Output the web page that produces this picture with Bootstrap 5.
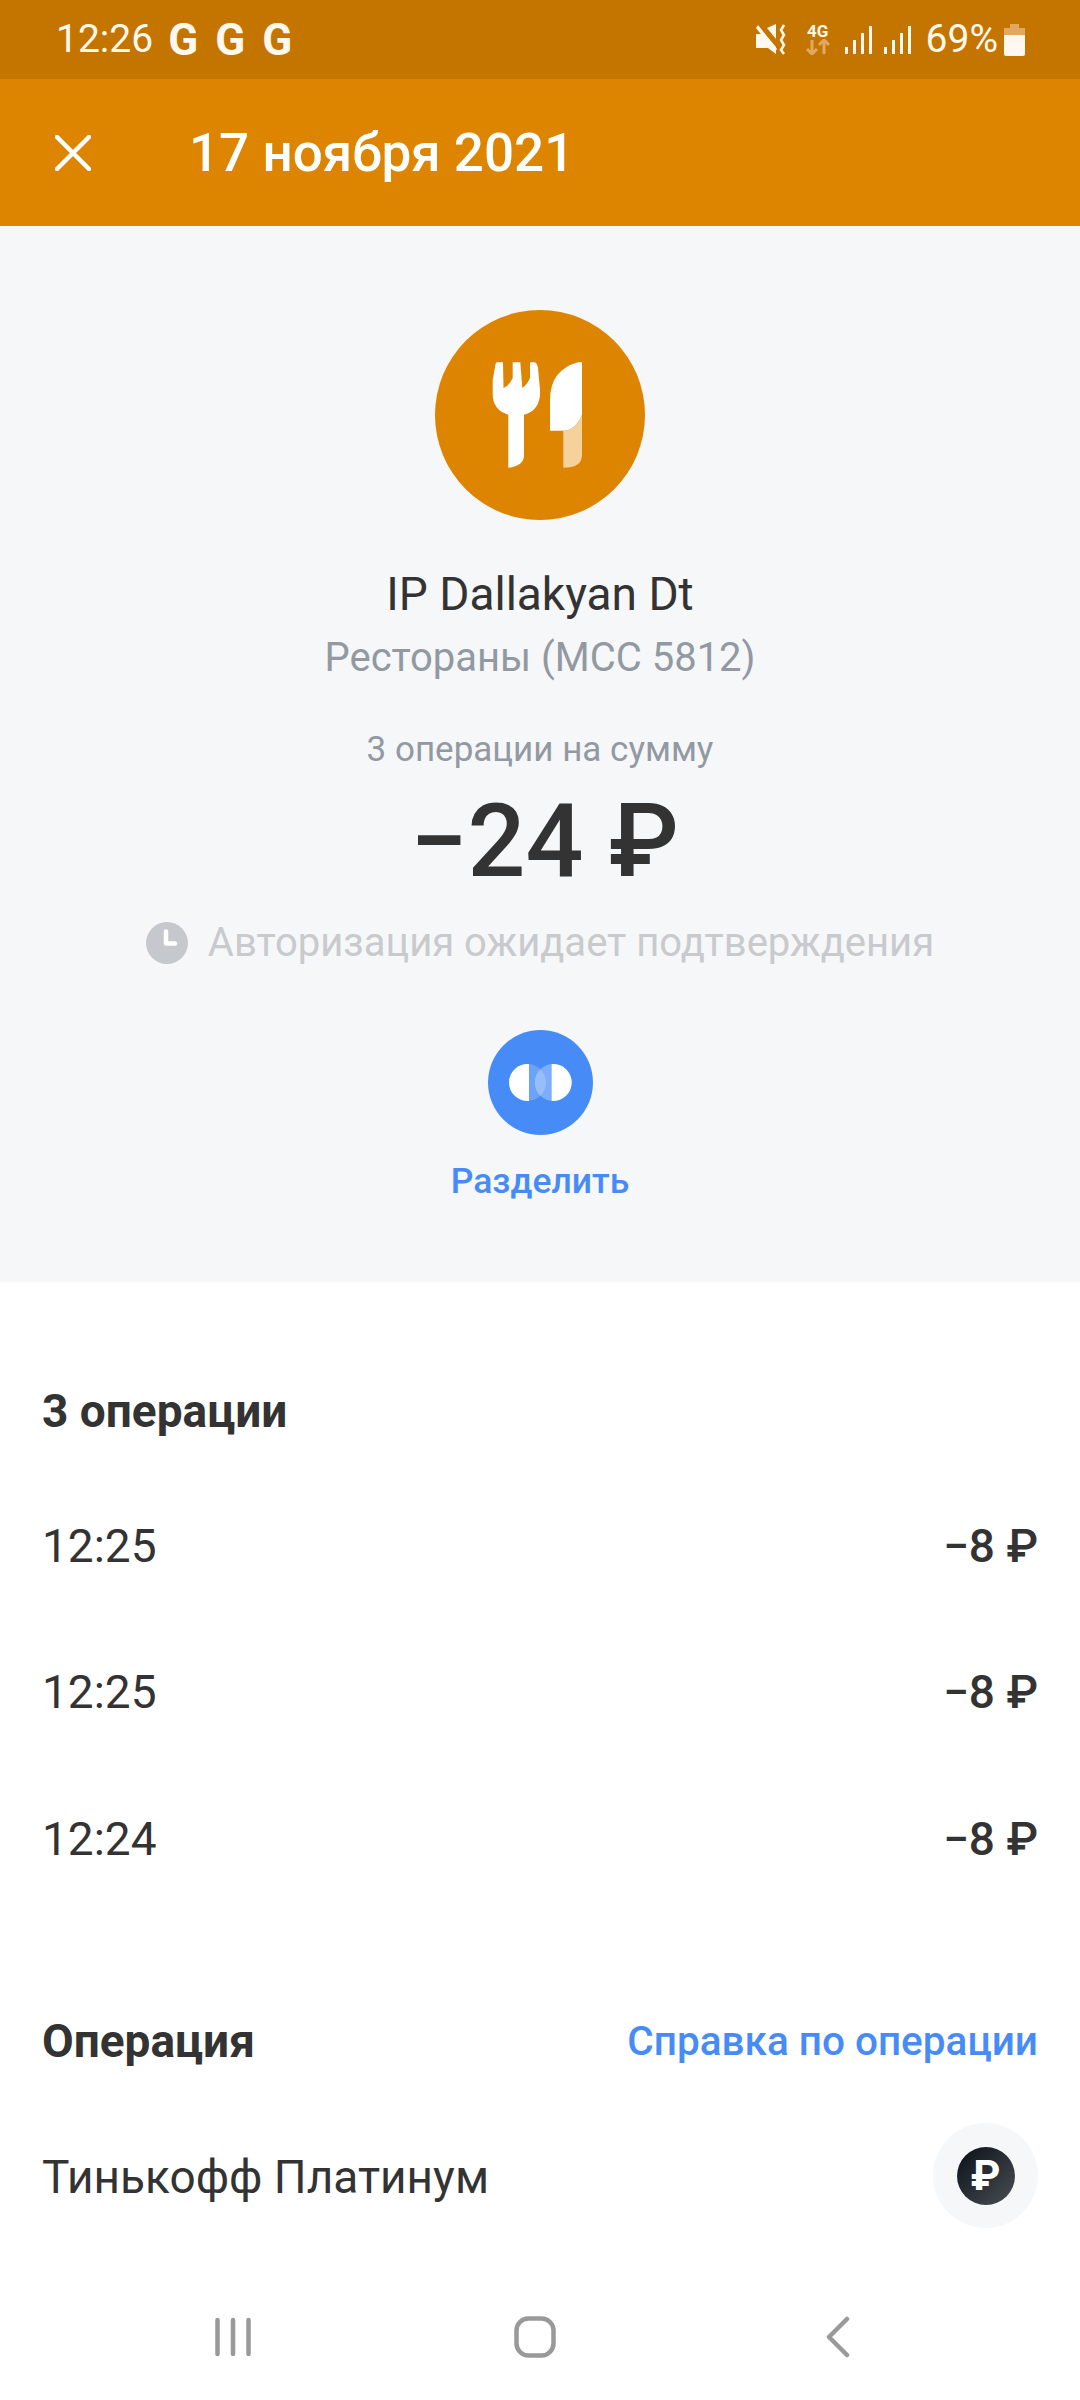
<!DOCTYPE html>
<html lang="ru">
<head>
    <meta charset="UTF-8">
    <meta name="viewport" content="width=device-width, initial-scale=1.0">
    <title>17 ноября 2021</title>
    <link href="https://cdn.jsdelivr.net/npm/bootstrap@5.3.0/dist/css/bootstrap.min.css" rel="stylesheet">
    <style>
        body { font-family: Roboto, "Liberation Sans", sans-serif; color: #333; background: #fff; }
        .screen { width: 1080px; height: 2400px; overflow: hidden; }

        .status-bar { height: 79px; background: #c47500; color: #fff8ee; padding: 0 55px 0 56px; font-size: 39px; }
        .status-left { gap: 17px; }
        .status-time { margin-right: -2px; }
        .status-g { font-weight: 700; font-size: 44px; line-height: 1; width: 30px; text-align: center; }
        .status-icons svg { display: block; }
        .ic-mute { margin-right: 18px; }
        .ic-net { margin-right: 15px; width: 24px; }
        .ic-net-label { font-size: 17px; line-height: 15px; font-weight: 700; text-align: center; white-space: nowrap; }
        .ic-sig { margin-right: 12px; }
        .ic-sig-last { margin-right: 15px; }
        .ic-batt { margin-left: 6px; }
        .top-bar { height: 147px; background: #dd8500; color: #fff; padding-left: 55px; }
        .top-title { font-size: 53px; font-weight: 500; margin-left: 98px; padding-top: 3px; }

        .summary { height: 1056px; background: #f6f7f8; padding-top: 84px; }
        .cat-circle { width: 210px; height: 210px; background: #dd8500; }
        .merchant { font-size: 46px; line-height: 50px; margin-top: 49px; }
        .category { font-size: 40px; line-height: 46px; margin-top: 16px; color: #9299a2; }
        .count-line { font-size: 35px; line-height: 40px; margin-top: 49px; color: #9299a2; }
        .total { font-size: 102px; line-height: 110px; margin-top: 16px; padding-left: 9px; font-weight: 500; }
        .auth-line { font-size: 40px; line-height: 44px; margin-top: 25px; color: #c8cacd; gap: 20px; }
        .split-circle { width: 105px; height: 105px; background: #478cf6; margin-top: 65px; }
        .split-label { font-size: 35.5px; line-height: 40px; margin-top: 26px; font-weight: 500; color: #478cf6; }

        .details { padding: 0 42px; }
        .section-title { font-size: 46px; line-height: 48px; font-weight: 700; }
        .ops-title { margin-top: 105px; }
        .ops-list { margin-top: 38px; }
        .op-row { height: 146.5px; font-size: 46px; }
        .op-sum { font-weight: 500; font-size: 46px; }
        .info-head { margin-top: 98px; }
        .help-link { font-size: 40.5px; font-weight: 500; color: #478cf6; text-decoration: none; }
        .card-line { margin-top: 52px; }
        .card-name { font-size: 46px; padding-top: 4px; }
        .card-chip { width: 105px; height: 105px; background: #f6f7f8; }
        .card-dot { width: 58px; height: 58px; background: linear-gradient(135deg, #0a1017, #4a4f55); color: #fff; font-size: 42px; font-weight: 700; line-height: 1; }

        .nav-bottom { height: 120px; background: #fff; padding-bottom: 6px; }
        .nav-menu { margin-left: 215px; }
        .nav-home { margin-left: 263px; }
        .nav-back { margin-left: 270px; }
    </style>
</head>
<body>
    <div class="screen d-flex flex-column">
        <!-- Статус-бар -->
        <div class="status-bar d-flex align-items-center justify-content-between flex-shrink-0">
            <div class="status-left d-flex align-items-center">
                <span class="status-time">12:26</span>
                <span class="status-g">G</span>
                <span class="status-g">G</span>
                <span class="status-g">G</span>
            </div>
            <div class="status-icons d-flex align-items-center">
                <svg class="ic-mute" width="32" height="32" viewBox="0 0 32 32" fill="#fff8ee">
                    <path d="M0 10h5l2-2 13 15v7l-8-6H0z"/>
                    <path d="M2 1l19 24-2 3L0 4z"/>
                    <path d="M11 4l9-4v15z"/>
                    <path d="M28 1l-3 5 3 5-3 5 3 5-3 5 3 4" fill="none" stroke="#fff8ee" stroke-width="2.5"/>
                </svg>
                <div class="ic-net d-flex flex-column align-items-center">
                    <span class="ic-net-label">4G</span>
                    <svg width="24" height="16" viewBox="0 0 24 16">
                        <path d="M6 1v14M1 10l5 5 5-5M18 15V1M13 6l5-5 5 5" fill="none" stroke="#e0a860" stroke-width="3"/>
                    </svg>
                </div>
                <svg class="ic-sig" width="27" height="29" viewBox="0 0 27 29" fill="#fff8ee">
                    <rect x="0" y="22" width="3" height="7"/><rect x="8" y="15" width="3" height="14"/><rect x="16" y="8" width="3" height="21"/><rect x="24" y="1" width="3" height="28"/>
                </svg>
                <svg class="ic-sig-last" width="27" height="29" viewBox="0 0 27 29" fill="#fff8ee">
                    <rect x="0" y="22" width="3" height="7"/><rect x="8" y="15" width="3" height="14"/><rect x="16" y="8" width="3" height="21"/><rect x="24" y="1" width="3" height="28"/>
                </svg>
                <span>69%</span>
                <svg class="ic-batt" width="21" height="32" viewBox="0 0 21 32">
                    <path d="M6 0h9v4h6v7H0V4h6z" fill="#e0a860"/>
                    <path d="M0 11h21v19a2 2 0 0 1-2 2H2a2 2 0 0 1-2-2z" fill="#fff8ee"/>
                </svg>
            </div>
        </div>

        <!-- Заголовок -->
        <div class="top-bar d-flex align-items-center flex-shrink-0">
            <svg width="36" height="36" viewBox="0 0 36 36" stroke="#fff" stroke-width="4.5" stroke-linecap="round">
                <path d="M2 2l32 32M34 2L2 34"/>
            </svg>
            <span class="top-title">17 ноября 2021</span>
        </div>

        <!-- Сводка -->
        <div class="summary d-flex flex-column align-items-center flex-shrink-0">
            <div class="cat-circle rounded-circle">
                <svg width="210" height="210" viewBox="0 0 210 210">
                    <path fill="#fff" d="M62 52.3H68L68.5 78Q74 76 77.7 68V52.3H85.3L87.3 78Q92 75 95 68V52.3H99Q102 52.3 103 58L105 80Q106 100 89 104.7V145Q89 156 73.3 157.7V104.7Q57.7 100 57.7 84V70L60 57Q60.5 52.3 62 52.3Z"/>
                    <path fill="#fff" d="M147 52.3V105Q140 120.7 128.3 120.7H115V90Q115 60 143 52.3Z"/>
                    <path fill="#f5d19b" d="M147 105V145Q147 157.7 128.3 157.7V120.7Q140 120.7 147 105Z"/>
                </svg>
            </div>
            <div class="merchant">IP Dallakyan Dt</div>
            <div class="category">Рестораны (МСС 5812)</div>
            <div class="count-line">3 операции на сумму</div>
            <div class="total">−24 ₽</div>
            <div class="auth-line d-flex align-items-center">
                <svg width="42" height="42" viewBox="0 0 42 42">
                    <circle cx="21" cy="21" r="21" fill="#c5c8cc"/>
                    <path d="M20 9.5V21.5H29" fill="none" stroke="#fff" stroke-width="4.5" stroke-linecap="round" stroke-linejoin="round"/>
                </svg>
                <span>Авторизация ожидает подтверждения</span>
            </div>
            <div class="split-circle rounded-circle d-flex align-items-center justify-content-center">
                <svg width="63" height="37" viewBox="0 0 63 37">
                    <circle cx="18.5" cy="18.5" r="18.5" fill="#fff" fill-opacity=".2"/>
                    <circle cx="44.2" cy="18.5" r="18.5" fill="#fff" fill-opacity=".3"/>
                    <path d="M20 .06A18.5 18.5 0 1 0 20 36.94Z" fill="#fff"/>
                    <path d="M42.7 .06A18.5 18.5 0 1 1 42.7 36.94Z" fill="#fff"/>
                </svg>
            </div>
            <div class="split-label">Разделить</div>
        </div>

        <!-- Операции -->
        <div class="details flex-grow-1">
            <div class="section-title ops-title">3 операции</div>
            <div class="ops-list">
                <div class="op-row d-flex align-items-center justify-content-between"><span>12:25</span><span class="op-sum">−8 ₽</span></div>
                <div class="op-row d-flex align-items-center justify-content-between"><span>12:25</span><span class="op-sum">−8 ₽</span></div>
                <div class="op-row d-flex align-items-center justify-content-between"><span>12:24</span><span class="op-sum">−8 ₽</span></div>
            </div>
            <div class="info-head d-flex align-items-center justify-content-between">
                <span class="section-title">Операция</span>
                <a class="help-link" href="#">Справка по операции</a>
            </div>
            <div class="card-line d-flex align-items-center justify-content-between">
                <span class="card-name">Тинькофф Платинум</span>
                <div class="card-chip rounded-circle d-flex align-items-center justify-content-center">
                    <div class="card-dot rounded-circle d-flex align-items-center justify-content-center">₽</div>
                </div>
            </div>
        </div>

        <!-- Навигация -->
        <div class="nav-bottom d-flex flex-shrink-0 align-items-center">
            <svg class="nav-menu" width="36" height="40" viewBox="0 0 36 40" stroke="#999" stroke-width="4.5" stroke-linecap="round">
                <path d="M2.5 3v34M18 3v34M33.5 3v34"/>
            </svg>
            <svg class="nav-home" width="42" height="42" viewBox="0 0 42 42" fill="none" stroke="#999" stroke-width="4.5">
                <rect x="2.5" y="2.5" width="37" height="37" rx="12"/>
            </svg>
            <svg class="nav-back" width="24" height="42" viewBox="0 0 24 42" fill="none" stroke="#999" stroke-width="4.5" stroke-linecap="round" stroke-linejoin="round">
                <path d="M21 3L3 21l18 18"/>
            </svg>
        </div>
    </div>

    <script src="https://cdn.jsdelivr.net/npm/bootstrap@5.3.0/dist/js/bootstrap.bundle.min.js"></script>
</body>
</html>
